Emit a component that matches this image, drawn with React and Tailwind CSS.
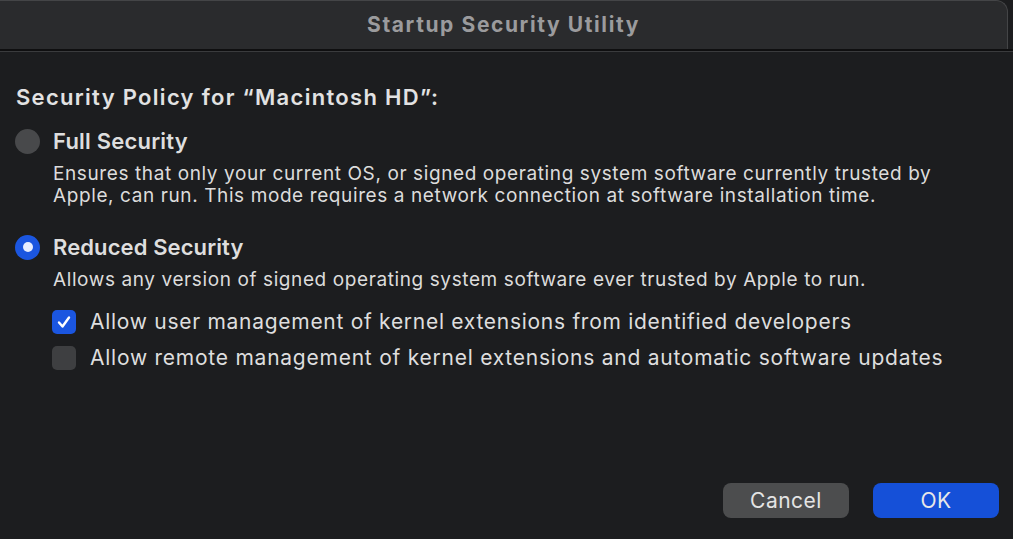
export default function App() {
  return (
    <div className="w-[1013px] h-[539px] overflow-hidden bg-[#1c1d1f] text-[#dedede] flex flex-col" style={{ fontFamily: 'Inter, "Noto Sans", sans-serif' }}>
      {/* title bar */}
      <div className="h-[49px] shrink-0 flex bg-[#1c1d1f]">
        <div className="flex-1 mr-[5px] rounded-tr-[12px] bg-[#2a2b2d] border-r border-t border-[#444547] flex items-center justify-center">
          <span className="text-[21px] font-bold text-[#9b9b9d] tracking-[1.6px]">Startup Security Utility</span>
        </div>
      </div>
      <div className="h-[2px] bg-[#0f0f10] shrink-0" />
      <div className="h-[1px] bg-[#3a3b3d] shrink-0" />

      {/* body */}
      <div className="flex-1 flex flex-col pl-[15px] pt-[32px]">
        <h1 className="ml-[1px] text-[22px] font-semibold leading-[26px] tracking-[1.3px] text-[#e2e2e2]">
          Security Policy for “Macintosh HD”:
        </h1>

        <div className="mt-[18px] flex items-center gap-[13px]">
          <div className="w-[25px] h-[25px] rounded-full bg-[#48494b]" />
          <span className="text-[22px] font-semibold leading-[26px] tracking-[0.2px]">Full Security</span>
        </div>
        <p className="ml-[38px] mt-[9px] text-[19px] leading-[22px] tracking-[0.6px] text-[#dcdcdc]">
          Ensures that only your current OS, or signed operating system software currently trusted by
          <br />
          Apple, can run. This mode requires a network connection at software installation time.
        </p>

        <div className="mt-[27px] flex items-center gap-[13px]">
          <div className="w-[25px] h-[25px] rounded-full bg-[#1b56e0] flex items-center justify-center">
            <div className="w-[10px] h-[10px] rounded-full bg-[#e8eeff]" />
          </div>
          <span className="text-[22px] font-semibold leading-[26px] tracking-[0.1px]">Reduced Security</span>
        </div>
        <p className="ml-[38px] mt-[9px] text-[19px] leading-[22px] tracking-[0.6px] text-[#dcdcdc]">
          Allows any version of signed operating system software ever trusted by Apple to run.
        </p>

        <div className="ml-[37px] mt-[19px] flex flex-col gap-[12px]">
          <div className="flex items-center gap-[14px]">
            <div className="w-[24px] h-[24px] rounded-[5px] bg-[#1b56e0] flex items-center justify-center">
              <svg width="16" height="16" viewBox="0 0 16 16" fill="none">
                <path d="M3 8.5 L6.5 12.5 L13 3.5" stroke="#ffffff" strokeWidth="2.4" strokeLinecap="round" strokeLinejoin="round" />
              </svg>
            </div>
            <span className="text-[21px] leading-[24px] tracking-[0.72px]">Allow user management of kernel extensions from identified developers</span>
          </div>
          <div className="flex items-center gap-[14px]">
            <div className="w-[24px] h-[24px] rounded-[5px] bg-[#3e3f41]" />
            <span className="text-[21px] leading-[24px] tracking-[0.76px]">Allow remote management of kernel extensions and automatic software updates</span>
          </div>
        </div>

        <div className="mt-auto mb-[21px] mr-[14px] flex justify-end gap-[24px]">
          <button className="w-[126px] h-[35px] rounded-[8px] bg-[#4c4d4e] text-[21px] tracking-[0.5px] text-[#e4e4e4]">Cancel</button>
          <button className="w-[126px] h-[35px] rounded-[8px] bg-[#1550d8] text-[21px] tracking-[0.5px] text-[#e8e8e8]">OK</button>
        </div>
      </div>
    </div>
  )
}
